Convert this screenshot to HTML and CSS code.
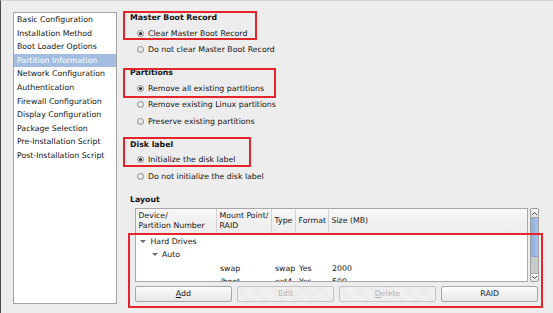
FILE: index.html
```html
<!DOCTYPE html>
<html>
<head>
<meta charset="utf-8">
<link rel="stylesheet" href="styles.css">
</head>
<body>
<div class="window">
  <ul class="sidebar">
    <li class="nav-item">Basic Configuration</li>
    <li class="nav-item">Installation Method</li>
    <li class="nav-item">Boot Loader Options</li>
    <li class="nav-item is-selected">Partition Information</li>
    <li class="nav-item">Network Configuration</li>
    <li class="nav-item">Authentication</li>
    <li class="nav-item">Firewall Configuration</li>
    <li class="nav-item">Display Configuration</li>
    <li class="nav-item">Package Selection</li>
    <li class="nav-item">Pre-Installation Script</li>
    <li class="nav-item">Post-Installation Script</li>
  </ul>

  <div class="main">
    <section class="group">
      <div class="group-title">Master Boot Record</div>
      <div class="option"><span class="radio is-checked"></span>Clear Master Boot Record</div>
      <div class="option"><span class="radio"></span>Do not clear Master Boot Record</div>
    </section>
    <section class="group">
      <div class="group-title">Partitions</div>
      <div class="option"><span class="radio is-checked"></span>Remove all existing partitions</div>
      <div class="option"><span class="radio"></span>Remove existing Linux partitions</div>
      <div class="option"><span class="radio"></span>Preserve existing partitions</div>
    </section>
    <section class="group">
      <div class="group-title">Disk label</div>
      <div class="option"><span class="radio is-checked"></span>Initialize the disk label</div>
      <div class="option"><span class="radio"></span>Do not initialize the disk label</div>
    </section>
    <section class="layout">
      <div class="group-title">Layout</div>
      <div class="table-wrap">
        <div class="tree">
          <div class="tree-head">
            <div class="th">Device/<br>Partition Number</div>
            <div class="th">Mount Point/<br>RAID</div>
            <div class="th th-mid">Type</div>
            <div class="th th-mid">Format</div>
            <div class="th th-mid th-last">Size (MB)</div>
          </div>
          <div class="tree-body">
            <div class="tr"><div class="td td-span lvl1"><span class="expander"></span>Hard Drives</div></div>
            <div class="tr"><div class="td td-span lvl2"><span class="expander"></span>Auto</div></div>
            <div class="tr"><div class="td"></div><div class="td">swap</div><div class="td">swap</div><div class="td">Yes</div><div class="td">2000</div></div>
            <div class="tr"><div class="td"></div><div class="td">/boot</div><div class="td">ext4</div><div class="td">Yes</div><div class="td">500</div></div>
          </div>
        </div>
        <div class="scrollbar">
          <div class="sb-arrow sb-up"><svg width="7" height="5" viewBox="0 0 7 5"><path d="M1 4 L3.5 1.5 L6 4" fill="none" stroke="#444" stroke-width="1"/></svg></div>
          <div class="sb-thumb"></div>
          <div class="sb-trough"></div>
          <div class="sb-arrow sb-down"><svg width="7" height="5" viewBox="0 0 7 5"><path d="M1 1 L3.5 3.5 L6 1" fill="none" stroke="#444" stroke-width="1"/></svg></div>
        </div>
      </div>
      <div class="buttons">
        <div class="btn"><u>A</u>dd</div>
        <div class="btn is-disabled">Edit</div>
        <div class="btn is-disabled"><u>D</u>elete</div>
        <div class="btn">RAID</div>
      </div>
    </section>
  </div>

  <div class="mark mark-mbr"></div>
  <div class="mark mark-parts"></div>
  <div class="mark mark-label"></div>
  <div class="mark mark-layout"></div>
</div>
</body>
</html>
```

FILE: styles.css
```css
* { box-sizing: border-box; }
html, body { margin: 0; padding: 0; }
body {
  width: 553px;
  height: 313px;
  overflow: hidden;
  background: #ededed;
  font-family: "DejaVu Sans", "Liberation Sans", sans-serif;
  font-size: 7.8px;
  color: #141414;
}
.window {
  position: relative;
  display: flex;
  align-items: flex-start;
  height: 313px;
  border-left: 1px solid #4a4a4a;
  border-top: 1px solid #d9d6d2;
  padding-left: 12px;
}
.sidebar {
  list-style: none;
  margin: 11px 0 0 0;
  padding: 0;
  width: 104px;
  height: 292px;
  background: #fff;
  border: 1px solid #a4a4a4;
}
.nav-item {
  height: 13.6px;
  line-height: 13.6px;
  padding-left: 3px;
  white-space: nowrap;
}
.nav-item.is-selected {
  background: #a3bde0;
  color: #fff;
}
.main {
  margin-left: 7px;
  padding: 10px 0 0 6px;
  width: 429px;
  display: flex;
  flex-direction: column;
}
.group { margin-bottom: 8px; }
.group-title {
  font-weight: bold;
  height: 14px;
  line-height: 14px;
}
.option {
  display: flex;
  align-items: center;
  height: 16.5px;
  padding-left: 6.5px;
  white-space: nowrap;
}
.radio {
  width: 7px;
  height: 7px;
  border-radius: 50%;
  border: 1px solid #8a8a8a;
  background: linear-gradient(#f6f6f6, #dcdcdc);
  margin-right: 4.5px;
  display: flex;
  align-items: center;
  justify-content: center;
  flex: none;
}
.radio.is-checked::after {
  content: "";
  width: 3px;
  height: 3px;
  border-radius: 50%;
  background: #222;
}
.layout { display: flex; flex-direction: column; }
.table-wrap {
  display: flex;
  margin: 1.5px 0 0 5px;
  width: 404px;
  height: 74px;
  gap: 2px;
}
.tree {
  flex: 1;
  border: 1px solid #a8a8a8;
  background: #fff;
  overflow: hidden;
}
.tree-head, .tr {
  display: grid;
  grid-template-columns: 81px 55px 24px 33px 1fr;
}
.tree-head {
  height: 25px;
  background: linear-gradient(#f7f7f7, #ececec);
  border-bottom: 1px solid #d0d0d0;
}
.th {
  padding: 2px 0 0 2.5px;
  line-height: 9.7px;
  border-right: 1px solid #d2d2d2;
  white-space: nowrap;
}
.th-mid { display: flex; align-items: center; padding-top: 0; }
.th-last { border-right: none; }
.tree-body { padding-top: 0.5px; }
.tr { height: 13.5px; line-height: 13.5px; }
.td { padding-left: 3px; white-space: nowrap; }
.td-span { grid-column: 1 / -1; display: flex; align-items: center; }
.lvl1 { padding-left: 3px; }
.lvl2 { padding-left: 14.5px; }
.expander {
  width: 0;
  height: 0;
  border-left: 3px solid transparent;
  border-right: 3px solid transparent;
  border-top: 3.5px solid #6a6a6a;
  margin: 0 4.5px 0 1px;
}
.scrollbar {
  width: 9px;
  display: flex;
  flex-direction: column;
  border: 1px solid #a0a0a0;
  border-radius: 2px;
  background: #cfcfcf;
  overflow: hidden;
}
.sb-arrow {
  height: 9px;
  background: linear-gradient(#fafafa, #e2e2e2);
  display: flex;
  align-items: center;
  justify-content: center;
}
.sb-up { border-bottom: 1px solid #a8a8a8; }
.sb-down { border-top: 1px solid #a8a8a8; height: 8px; }
.sb-thumb {
  height: 39px;
  background: linear-gradient(90deg, #8eaee0, #a8c2ea);
  border-bottom: 1px solid #8aa2c8;
}
.sb-trough { flex: 1; background: #cacaca; }
.buttons {
  display: flex;
  gap: 5.5px;
  margin: 4px 0 0 5px;
  width: 403px;
}
.btn {
  flex: 1;
  height: 16px;
  line-height: 14px;
  text-align: center;
  border: 1px solid #a6a6a6;
  border-radius: 2px;
  background: linear-gradient(#fdfdfd, #e6e6e6);
  color: #141414;
}
.btn u { text-decoration-thickness: 1px; text-underline-offset: 1px; }
.btn.is-disabled {
  color: #b4b4b4;
  background: repeating-linear-gradient(45deg, #f3f3f3 0 1px, #e9e9e9 1px 2px);
  border-color: #c4c4c4;
}
.mark {
  position: absolute;
  border: 2px solid #e4262c;
  pointer-events: none;
}
.mark-mbr { left: 122px; top: 10px; width: 134px; height: 29px; }
.mark-parts { left: 122px; top: 67px; width: 153px; height: 30px; }
.mark-label { left: 122px; top: 136px; width: 128px; height: 30px; }
.mark-layout { left: 127px; top: 232px; width: 415px; height: 75px; }
```
